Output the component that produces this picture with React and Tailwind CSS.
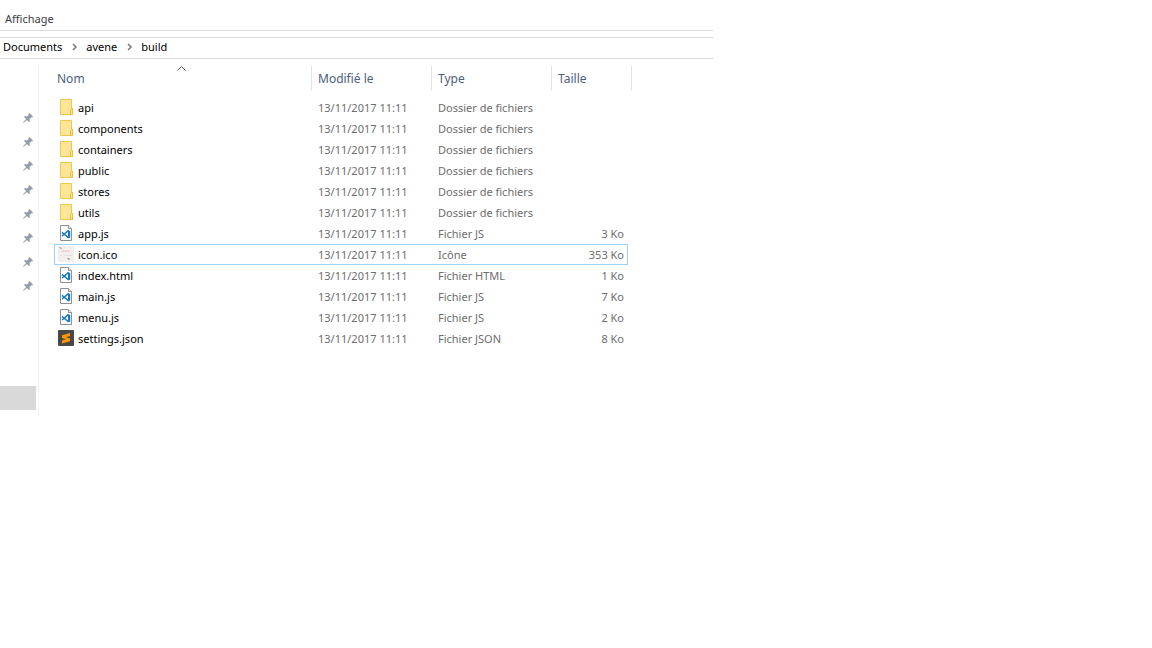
import clsx from 'clsx';

const files = [
  { name: 'api', kind: 'folder', type: 'Dossier de fichiers', size: '' },
  { name: 'components', kind: 'folder', type: 'Dossier de fichiers', size: '' },
  { name: 'containers', kind: 'folder', type: 'Dossier de fichiers', size: '' },
  { name: 'public', kind: 'folder', type: 'Dossier de fichiers', size: '' },
  { name: 'stores', kind: 'folder', type: 'Dossier de fichiers', size: '' },
  { name: 'utils', kind: 'folder', type: 'Dossier de fichiers', size: '' },
  { name: 'app.js', kind: 'code', type: 'Fichier JS', size: '3 Ko' },
  { name: 'icon.ico', kind: 'image', type: 'Icône', size: '353 Ko', focused: true },
  { name: 'index.html', kind: 'code', type: 'Fichier HTML', size: '1 Ko' },
  { name: 'main.js', kind: 'code', type: 'Fichier JS', size: '7 Ko' },
  { name: 'menu.js', kind: 'code', type: 'Fichier JS', size: '2 Ko' },
  { name: 'settings.json', kind: 'sublime', type: 'Fichier JSON', size: '8 Ko' },
];

const pins = [1, 2, 3, 4, 5, 6, 7, 8];

function FolderIcon() {
  return (
    <svg className="mt-px size-4 shrink-0" viewBox="0 0 16 16">
      <path d="M2.5.5h11v9h1v6h-12z" fill="#ffe598" stroke="#ebc94c" />
      <path d="M12.5 15.5v-5l1-1h1v6z" fill="#ffe28a" stroke="#e9c23c" />
    </svg>
  );
}

function CodeIcon() {
  return (
    <svg className="mt-px size-4 shrink-0" viewBox="0 0 16 16">
      <path d="M2.5.5h8l3 3v12h-11z" fill="#fff" stroke="#8f8f8f" />
      <path d="M10.5.5v3h3" fill="#f2f2f2" stroke="#8f8f8f" />
      <path d="M10 5 12.2 6v6.5l-2.2 1z" fill="#1279c4" />
      <path d="M10.4 5.6 4 11M4 7.4l6.4 5.4" fill="none" stroke="#1279c4" strokeWidth="1.4" />
    </svg>
  );
}

function ImageIcon() {
  return (
    <svg className="mt-px size-4 shrink-0" viewBox="0 0 16 16">
      <path d="M0 0h16v16H0z" fill="#f3efef" />
      <path d="M1 1h2v1H1zM2 2h2v1H2z" fill="#c4b4b8" />
      <path d="M4 4h8v1H4z" fill="#f6dcda" />
      <path d="M4 5h2v1H4zM7 5h2v1H7zM10 5h1v1h-1z" fill="#f5bdbb" />
      <path d="M2 9h2v1H2zM6 9h1v1H6zM8 9h6v1H8z" fill="#e6dddd" />
      <path d="M9 12h3v1H9zM10 13h2v1h-2z" fill="#b9adb0" />
    </svg>
  );
}

function SublimeIcon() {
  return (
    <svg className="mt-px size-4 shrink-0" viewBox="0 0 16 16">
      <rect width="16" height="16" rx="1" fill="#484848" />
      <path d="M4 5.2 12 3v3L8 7.2l4 1.2v2.8L4 13.4v-3l4-1.2-4-1.2z" fill="#ff9800" />
    </svg>
  );
}

function PinIcon() {
  return (
    <svg className="size-3" viewBox="0 0 12 12">
      <path
        d="M7.5 1 11 4.5 10 5.5H9L7.5 7 8 9 7 10 4.9 7.9 1.5 11 1 10.5 4.1 7.1 2 5 3 4 5 4.5 6.5 3V2z"
        fill="#929ea8"
      />
    </svg>
  );
}

function Chevron() {
  return (
    <svg className="mx-2 size-2" viewBox="0 0 8 8">
      <path d="m3 1 3 3-3 3" fill="none" stroke="#777" strokeWidth="1.5" />
    </svg>
  );
}

const icons = {
  folder: FolderIcon,
  code: CodeIcon,
  image: ImageIcon,
  sublime: SublimeIcon,
};

function HeaderCell({ label, sorted, first, colSpan }) {
  return (
    <th scope="col" colSpan={colSpan} className="h-[31px] p-0 align-top font-normal">
      <button
        type="button"
        className={clsx(
          'relative flex h-[25px] w-full items-center border-r border-[#e3e3e3] text-[12px] text-[#4c607a]',
          first ? 'pl-[3px]' : 'pl-1.5'
        )}
      >
        {label}
        {sorted && (
          <svg className="absolute top-0 left-[123px] h-[5px] w-[9px]" viewBox="0 0 9 5">
            <path d="m.5 4.5 4-4 4 4" fill="none" stroke="#606060" />
          </svg>
        )}
      </button>
    </th>
  );
}

function FileRow({ file }) {
  const Icon = icons[file.kind];
  const edge = file.focused ? 'border-[#99d1ff]' : 'border-transparent';

  return (
    <tr className="h-[21px] text-[#6d6d6d]">
      <td className={clsx('border-y border-l p-0 pl-[3px] text-black', edge)}>
        <div className="flex h-[19px] items-start gap-1 leading-[19px]">
          <Icon />
          {file.name}
        </div>
      </td>
      <td className={clsx('border-y p-0 pl-1.5', edge)}>13/11/2017 11:11</td>
      <td className={clsx('border-y p-0 pl-1.5', edge)}>{file.type}</td>
      <td className={clsx('border-y border-r p-0 pr-[3px] text-right', edge)}>{file.size}</td>
      <td className="p-0"></td>
    </tr>
  );
}

export default function App() {
  return (
    <div className="min-h-screen bg-white font-['Noto_Sans','Open_Sans',sans-serif] text-[11px] leading-4 whitespace-nowrap">
      <div className="w-full max-w-[713px]">
        <div className="flex h-[31px] items-end border-b border-[#dadada] pb-[3px] pl-[5px]">
          <button type="button" className="text-[#3c3c3c]">
            Affichage
          </button>
        </div>

        <nav className="mt-1.5 flex h-[22px] items-center border-y border-[#d9d9d9] pb-0.5 pl-[3px] text-black">
          <a href="#documents">Documents</a>
          <Chevron />
          <a href="#avene">avene</a>
          <Chevron />
          <a href="#build">build</a>
        </nav>

        <main className="flex items-start pt-[7px]">
          <aside className="flex h-[350px] w-[39px] shrink-0 flex-col border-r border-[#f3f3f3] pt-10">
            {pins.map((pin) => (
              <div key={pin} className="flex h-6 items-center justify-end pr-1">
                <PinIcon />
              </div>
            ))}
            <div className="mt-[88px] mr-0.5 h-6 bg-[#d9d9d9]"></div>
          </aside>

          <table className="ml-[15px] w-[578px] table-fixed border-separate border-spacing-0 text-left">
            <colgroup>
              <col className="w-[258px]" />
              <col className="w-[120px]" />
              <col className="w-[120px]" />
              <col className="w-[76px]" />
              <col className="w-1" />
            </colgroup>
            <thead>
              <tr>
                <HeaderCell label="Nom" sorted first />
                <HeaderCell label="Modifié le" />
                <HeaderCell label="Type" />
                <HeaderCell label="Taille" colSpan={2} />
              </tr>
            </thead>
            <tbody>
              {files.map((file) => (
                <FileRow key={file.name} file={file} />
              ))}
            </tbody>
          </table>
        </main>
      </div>
    </div>
  );
}
